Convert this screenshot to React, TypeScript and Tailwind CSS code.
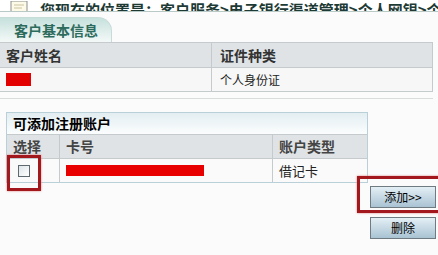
import React from "react";

function DocIcon() {
  return (
    <svg width="18" height="14" viewBox="0 0 18 14" className="shrink-0">
      <rect x="1" y="0" width="16" height="13" fill="#fdfbe8" stroke="#8a8f8c" strokeWidth="1" />
      <line x1="4" y1="4" x2="14" y2="4" stroke="#c9c2a0" />
      <line x1="4" y1="7" x2="12" y2="7" stroke="#c9c2a0" />
    </svg>
  );
}

function Btn({ label }: { label: string }) {
  return (
    <button className="w-[66px] h-[22px] border border-[#6f7b80] bg-gradient-to-b from-[#e4eff5] to-[#a9c3d3] text-[12px] text-black leading-none">
      {label}
    </button>
  );
}

export default function App() {
  return (
    <div className="relative w-[438px] h-[255px] overflow-hidden bg-[#fbfbfb] font-['Noto_Sans_CJK_SC',sans-serif] text-[#222]">
      {/* breadcrumb strip, only the lower half of the line is on screen */}
      <div className="h-[12px] overflow-hidden border-b border-[#b9c9c6] flex items-end pl-[10px] gap-[12px] bg-white">
        <div className="-mb-[4px]"><DocIcon /></div>
        <div className="-mb-[8px] text-[15px] font-bold text-[#1d3a35] whitespace-nowrap leading-[18px]">
          您现在的位置是：客户服务&gt;电子银行渠道管理&gt;个人网银&gt;个人用户
        </div>
      </div>

      <div className="mt-[5px] h-[25px] w-[112px] rounded-tr-[14px] bg-gradient-to-b from-[#c6e1dc] to-[#f4f9f8] border-t border-r border-[#c7dcd8] flex items-center pl-[14px] text-[14px] font-bold text-[#2d6b5d]">
        客户基本信息
      </div>

      <div className="w-[433px] border-y border-r border-[#c5cacc]">
        <div className="grid grid-cols-[212px_1fr] h-[25px] bg-[#dfe3e5] border-b border-[#c5cacc] text-[14px] font-bold text-[#333]">
          <div className="flex items-center pl-[6px] border-r border-[#c5cacc]">客户姓名</div>
          <div className="flex items-center pl-[8px]">证件种类</div>
        </div>
        <div className="grid grid-cols-[212px_1fr] h-[23px] bg-[#f7f7f7] text-[12px]">
          <div className="flex items-center pl-[6px] border-r border-[#c5cacc]">
            <div className="w-[25px] h-[13px] bg-[#e20000]" />
          </div>
          <div className="flex items-center pl-[8px]">个人身份证</div>
        </div>
      </div>
      <div className="mt-[6px] w-[433px] border-t border-[#d8dcdd]" />

      <div className="mt-[13px] ml-[6px] w-[362px] border border-[#b9d0d8]">
        <div className="h-[22px] bg-gradient-to-b from-[#e3eef2] to-[#fbfdfd] border-b border-[#c5cacc] flex items-center pl-[6px] text-[14px] font-bold text-black">
          可添加注册账户
        </div>
        <div className="grid grid-cols-[53px_213px_1fr] h-[24px] bg-[#dfe3e5] border-b border-[#c5cacc] text-[14px] font-bold text-[#444]">
          <div className="flex items-center pl-[6px] border-r border-[#c5cacc]">选择</div>
          <div className="flex items-center pl-[6px] border-r border-[#c5cacc]">卡号</div>
          <div className="flex items-center pl-[6px]">账户类型</div>
        </div>
        <div className="grid grid-cols-[53px_213px_1fr] h-[23px] bg-[#fafafa] text-[13px]">
          <div className="flex items-center pl-[11px] border-r border-[#c5cacc]">
            <div className="w-[12px] h-[12px] border border-[#5e6a70] bg-gradient-to-br from-[#dfe5e8] to-white" />
          </div>
          <div className="flex items-center pl-[6px] border-r border-[#c5cacc]">
            <div className="w-[138px] h-[11px] bg-[#e80000]" />
          </div>
          <div className="flex items-center pl-[6px]">借记卡</div>
        </div>
      </div>

      <div className="mt-[3px] flex flex-col items-end gap-[9px] pr-[2px]">
        <Btn label="添加>>" />
        <Btn label="删除" />
      </div>

      {/* red highlight frames */}
      <div className="absolute left-[7px] top-[155px] w-[34px] h-[36px] border-[3px] border-[#a3181c] shadow-[0_0_2px_#e08080]" />
      <div className="absolute left-[357px] top-[176px] w-[84px] h-[37px] border-[3px] border-[#a3181c] shadow-[0_0_2px_#e08080]" />
    </div>
  );
}
